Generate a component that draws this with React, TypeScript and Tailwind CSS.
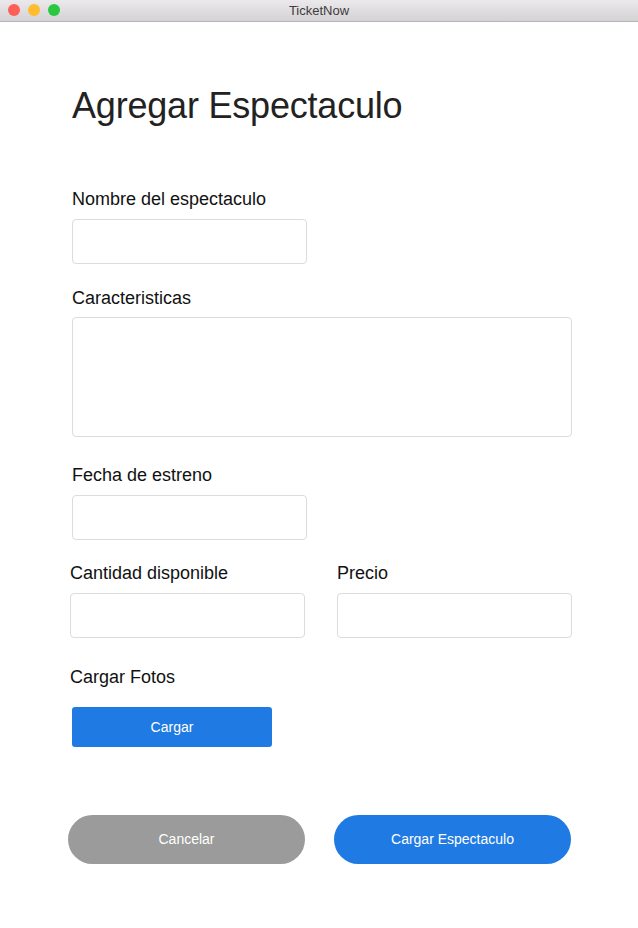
import React from "react";

const font = { fontFamily: '"Liberation Sans", Arial, sans-serif' };

function Label({ children, className = "" }: { children: React.ReactNode; className?: string }) {
  return <div className={`text-[18px] leading-[24px] text-[#111111] ${className}`}>{children}</div>;
}

function Field({ className = "" }: { className?: string }) {
  return <div className={`h-[45px] rounded-[4px] border border-[#dcdcdc] bg-white ${className}`} />;
}

export default function App() {
  return (
    <div className="w-[638px] h-[928px] bg-white" style={font}>
      <div className="relative flex h-[22px] items-center justify-center border-b border-[#b4b4b4] bg-gradient-to-b from-[#ebe9eb] to-[#d4d2d4]">
        <div className="absolute left-[8px] top-[4px] flex gap-[8px]">
          <span className="h-[12px] w-[12px] rounded-full bg-[#fe5f57]" />
          <span className="h-[12px] w-[12px] rounded-full bg-[#febc2e]" />
          <span className="h-[12px] w-[12px] rounded-full bg-[#28c840]" />
        </div>
        <span className="text-[13px] text-[#3d3d3d]">TicketNow</span>
      </div>

      <div className="flex flex-col pl-[72px]">
        <h1 className="mt-[64px] text-[36px] leading-[40px] tracking-[-0.2px] text-[#222222]">Agregar Espectaculo</h1>

        <Label className="mt-[61px]">Nombre del espectaculo</Label>
        <Field className="mt-[8px] w-[235px]" />

        <Label className="mt-[22px]">Caracteristicas</Label>
        <div className="mt-[7px] h-[120px] w-[500px] rounded-[4px] border border-[#dcdcdc]" />

        <Label className="mt-[26px]">Fecha de estreno</Label>
        <Field className="mt-[8px] w-[235px]" />

        <div className="-ml-[2px] mt-[21px] flex gap-[32px]">
          <div className="flex flex-col">
            <Label>Cantidad disponible</Label>
            <Field className="mt-[8px] w-[235px]" />
          </div>
          <div className="flex flex-col">
            <Label>Precio</Label>
            <Field className="mt-[8px] w-[235px]" />
          </div>
        </div>

        <Label className="-ml-[2px] mt-[27px]">Cargar Fotos</Label>
        <button className="mt-[18px] flex h-[40px] w-[200px] items-center justify-center rounded-[3px] bg-[#1f7be3] text-[14px] text-white">
          Cargar
        </button>

        <div className="-ml-[4px] mt-[68px] flex gap-[29px]">
          <button className="flex h-[49px] w-[237px] items-center justify-center rounded-full bg-[#9b9b9b] text-[14px] text-white">
            Cancelar
          </button>
          <button className="flex h-[49px] w-[237px] items-center justify-center rounded-full bg-[#1f7be3] text-[14px] text-white">
            Cargar Espectaculo
          </button>
        </div>
      </div>
    </div>
  );
}
